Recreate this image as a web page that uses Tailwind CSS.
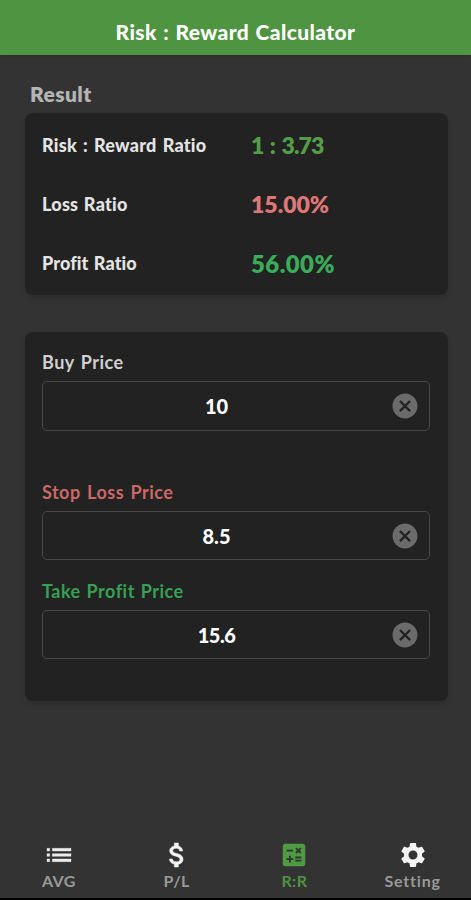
<!DOCTYPE html>
<html lang="en">
<head>
    <meta charset="UTF-8">
    <meta name="viewport" content="width=device-width, initial-scale=1.0">
    <title>Risk : Reward Calculator</title>
    <script src="https://cdn.jsdelivr.net/npm/@tailwindcss/browser@4"></script>
</head>
<body class="bg-[#333333] font-['Lato','Open_Sans',sans-serif]">
    <svg class="hidden">
        <symbol id="cancel" viewBox="0 0 24 24">
            <path d="M12 2C6.47 2 2 6.47 2 12s4.47 10 10 10 10-4.47 10-10S17.53 2 12 2zm4.7 13.4L15.4 16.7 12 13.3 8.6 16.7 7.3 15.4 10.7 12 7.3 8.6 8.6 7.3 12 10.7 15.4 7.3 16.7 8.6 13.3 12 16.7 15.4z"/>
        </symbol>
    </svg>

    <div class="flex h-[900px] w-[471px] flex-col overflow-hidden border-b-2 border-black">
        <!-- Header -->
        <header class="flex h-[55px] shrink-0 items-end justify-center bg-[#4e9441] pb-[9px] shadow-sm">
            <h1 class="whitespace-nowrap text-[21px] leading-7 font-black tracking-[0.4px] [word-spacing:1px] text-white">Risk : Reward Calculator</h1>
        </header>

        <main class="flex-1 pr-[23px] pl-[25px]">
            <h2 class="mt-[25px] ml-[5px] text-[21px] leading-7 font-extrabold tracking-[0.4px] text-[#b4b4b4]">Result</h2>

            <!-- Result card -->
            <section class="mt-[5px] grid h-[182px] grid-cols-[209px_1fr] content-start items-center rounded-lg bg-[#222222] px-[17px] pt-[3px] shadow-md">
                <span class="pb-px text-[18px] font-black tracking-[0.25px] [word-spacing:1.5px] text-[#e4e4e4]">Risk : Reward Ratio</span>
                <span class="text-[23px] leading-[59px] font-extrabold tracking-[-0.9px] [word-spacing:2px] text-[#569c49]">1 : 3.73</span>
                <span class="pb-px text-[18px] font-black tracking-[0.25px] [word-spacing:1px] text-[#e4e4e4]">Loss Ratio</span>
                <span class="text-[23px] leading-[59px] font-extrabold text-[#df7777]">15.00%</span>
                <span class="pb-px text-[18px] font-black tracking-[0.1px] [word-spacing:1px] text-[#e4e4e4]">Profit Ratio</span>
                <span class="text-[24px] leading-[59px] font-extrabold tracking-[0.4px] text-[#3aaa5b]">56.00%</span>
            </section>

            <!-- Price inputs -->
            <section class="mt-[37px] h-[369px] rounded-lg bg-[#222222] pt-4 pr-[18px] pl-[17px] shadow-md">
                <label class="block text-[18px] leading-7 font-bold tracking-[0.5px] [word-spacing:1.5px] text-[#d0d0d0]">Buy Price</label>
                <div class="mt-[5px] flex h-[50px] items-center rounded-[5px] border border-[#484848] pr-[9px]">
                    <span class="flex-1 text-center text-[20px] font-black text-white">10</span>
                    <svg class="size-[30px] fill-[#6b6b6b]"><use href="#cancel"/></svg>
                </div>

                <label class="mt-[47px] block text-[18px] leading-7 font-bold tracking-[0.5px] [word-spacing:1.5px] text-[#cb6868]">Stop Loss Price</label>
                <div class="mt-[5px] flex h-[49px] items-center rounded-[5px] border border-[#484848] pr-[9px]">
                    <span class="flex-1 text-center text-[20px] font-black text-white">8.5</span>
                    <svg class="size-[30px] fill-[#6b6b6b]"><use href="#cancel"/></svg>
                </div>

                <label class="mt-[17px] block text-[18px] leading-7 font-bold tracking-[0.5px] [word-spacing:1px] text-[#37a053]">Take Profit Price</label>
                <div class="mt-[5px] flex h-[49px] items-center rounded-[5px] border border-[#484848] pr-[9px]">
                    <span class="flex-1 text-center text-[20px] font-black tracking-[-0.5px] text-white">15.6</span>
                    <svg class="size-[30px] fill-[#6b6b6b]"><use href="#cancel"/></svg>
                </div>
            </section>
        </main>

        <!-- Bottom navigation -->
        <nav class="grid h-[59px] shrink-0 grid-cols-4 text-[16px] leading-[19px] font-bold tracking-[0.4px] text-[#999999]">
            <a class="flex flex-col items-center">
                <svg class="size-8 fill-[#ececec] stroke-[#ececec] stroke-[0.3]" viewBox="0 0 24 24"><path d="M3 13h2v-2H3v2zm0 4h2v-2H3v2zm0-8h2V7H3v2zm4 4h14v-2H7v2zm0 4h14v-2H7v2zM7 7v2h14V7H7z"/></svg>
                <span>AVG</span>
            </a>
            <a class="flex flex-col items-center">
                <svg class="size-8 fill-[#f4f4f4] stroke-[#f4f4f4] stroke-[0.4]" viewBox="0 0 24 24"><path d="M11.8 10.9c-2.27-.59-3-1.2-3-2.15 0-1.09 1.01-1.85 2.7-1.85 1.78 0 2.44.85 2.5 2.1h2.21c-.07-1.72-1.12-3.3-3.21-3.81V3h-3v2.16c-1.94.42-3.5 1.68-3.5 3.61 0 2.31 1.91 3.46 4.7 4.13 2.5.6 3 1.48 3 2.41 0 .69-.49 1.79-2.7 1.79-2.06 0-2.87-.92-2.98-2.1h-2.2c.12 2.19 1.76 3.42 3.68 3.83V21h3v-2.15c1.95-.37 3.5-1.5 3.5-3.55 0-2.84-2.43-3.81-4.7-4.4z"/></svg>
                <span>P/L</span>
            </a>
            <a class="flex flex-col items-center text-[#4e9441]">
                <svg class="my-px size-[30px] fill-[#4e9b41]" viewBox="0 0 24 24"><path d="M19 3H5c-1.1 0-2 .9-2 2v14c0 1.1.9 2 2 2h14c1.1 0 2-.9 2-2V5c0-1.1-.9-2-2-2zm-5.97 4.06L14.09 6l1.41 1.41L16.91 6l1.06 1.06-1.41 1.41 1.41 1.41-1.06 1.06-1.41-1.4-1.41 1.41-1.06-1.06 1.41-1.41-1.41-1.42zM6.25 7.72h5v1.5h-5v-1.5zM11.5 16h-2v2H8v-2H6v-1.5h2v-2h1.5v2h2V16zm6.5 1.25h-5v-1.5h5v1.5zm0-2.5h-5v-1.5h5v1.5z"/></svg>
                <span>R:R</span>
            </a>
            <a class="flex flex-col items-center pl-px">
                <svg class="my-px size-[30px] fill-[#f4f4f4]" viewBox="0 0 24 24"><path d="M19.14 12.94c.04-.3.06-.61.06-.94 0-.32-.02-.64-.07-.94l2.03-1.58c.18-.14.23-.41.12-.61l-1.92-3.32c-.12-.22-.37-.29-.59-.22l-2.39.96c-.5-.38-1.03-.7-1.62-.94l-.36-2.54c-.04-.24-.24-.41-.48-.41h-3.84c-.24 0-.43.17-.47.41l-.36 2.54c-.59.24-1.13.57-1.62.94l-2.39-.96c-.22-.08-.47 0-.59.22L2.74 8.87c-.12.21-.08.47.12.61l2.03 1.58c-.05.3-.09.63-.09.94s.02.64.07.94l-2.03 1.58c-.18.14-.23.41-.12.61l1.92 3.32c.12.22.37.29.59.22l2.39-.96c.5.38 1.03.7 1.62.94l.36 2.54c.05.24.24.41.48.41h3.84c.24 0 .44-.17.47-.41l.36-2.54c.59-.24 1.13-.56 1.62-.94l2.39.96c.22.08.47 0 .59-.22l1.92-3.32c.12-.22.07-.47-.12-.61l-2.01-1.58zM12 15.6c-1.98 0-3.6-1.62-3.6-3.6s1.62-3.6 3.6-3.6 3.6 1.62 3.6 3.6-1.62 3.6-3.6 3.6z"/></svg>
                <span class="tracking-[0.8px]">Setting</span>
            </a>
        </nav>
    </div>
</body>
</html>
